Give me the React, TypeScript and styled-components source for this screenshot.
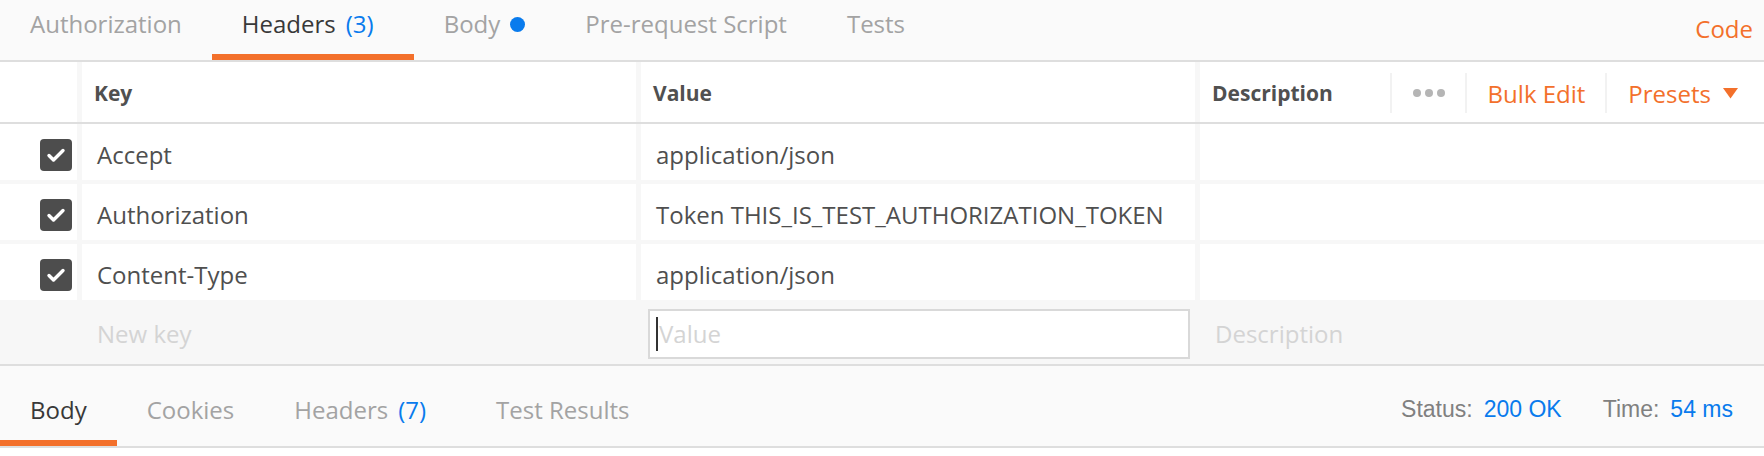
import React from "react";
import styled, { createGlobalStyle } from "styled-components";

const ORANGE = "#f3702b";
const BLUE = "#097bed";
const LINE = "#dedede";

const GlobalStyle = createGlobalStyle`
  html, body { margin: 0; padding: 0; background: #ffffff; }
  body { font-family: "Open Sans", "Liberation Sans", sans-serif; -webkit-font-smoothing: antialiased; }
  * { box-sizing: border-box; }
`;

const Page = styled.div`
  width: 1764px;
  display: flex;
  flex-direction: column;
`;

const TabBar = styled.div`
  height: 62px;
  display: flex;
  justify-content: space-between;
  align-items: stretch;
  background: #fafafa;
  border-bottom: 2px solid ${LINE};
`;

const TabList = styled.div`
  display: flex;
  align-items: stretch;
`;

const Tab = styled.div<{ $active?: boolean }>`
  display: flex;
  align-items: flex-start;
  padding: 7px 30px 0;
  font-size: 24px;
  line-height: 33px;
  white-space: nowrap;
  color: ${(p) => (p.$active ? "#383838" : "#a3a3a3")};
  box-shadow: ${(p) => (p.$active ? `inset 0 -6px 0 ${ORANGE}` : "none")};
`;

const Count = styled.span`
  color: ${BLUE};
  margin-left: 10px;
  margin-right: 10px;
`;

const Dot = styled.span`
  width: 15px;
  height: 15px;
  border-radius: 50%;
  background: ${BLUE};
  margin: 10px 0 0 10px;
`;

const CodeLink = styled.div`
  padding: 12px 11px 0 0;
  font-size: 24px;
  line-height: 33px;
  color: ${ORANGE};
`;

const Columns = styled.div`
  display: grid;
  grid-template-columns: 77px 554px 554px 1fr;
  column-gap: 5px;
`;

const HeaderRow = styled(Columns)`
  height: 62px;
  background: #f7f7f7;
  border-bottom: 2px solid ${LINE};
`;

const HeaderCell = styled.div`
  display: flex;
  align-items: center;
  background: #ffffff;
  padding: 2px 0 0 12px;
  font-size: 21px;
  font-weight: 700;
  color: #505050;
`;

const HeaderLabel = styled.span`
  flex: 1;
`;

const Action = styled.div<{ $last?: boolean }>`
  display: flex;
  align-items: center;
  height: 40px;
  padding: 0 ${(p) => (p.$last ? "26px" : "20px")} 0 21px;
  border-left: 2px solid #f2f2f2;
  font-size: 24px;
  font-weight: 400;
  color: ${ORANGE};
`;

const Dots = styled.div`
  display: flex;
  gap: 4px;
`;

const DotSmall = styled.span`
  width: 8px;
  height: 8px;
  border-radius: 50%;
  background: #b5b5b5;
`;

const Caret = styled.svg`
  margin-left: 12px;
`;

const Rows = styled.div`
  display: flex;
  flex-direction: column;
  gap: 4px;
  background: #f7f7f7;
`;

const DataRow = styled(Columns)`
  height: 56px;
`;

const CheckCell = styled.div`
  display: flex;
  align-items: center;
  justify-content: flex-end;
  padding: 6px 5px 0 0;
  background: #ffffff;
`;

const CheckBox = styled.span`
  width: 32px;
  height: 32px;
  border-radius: 4px;
  background: #4d4d4d;
  display: flex;
  align-items: center;
  justify-content: center;
`;

const Cell = styled.div`
  display: flex;
  align-items: center;
  padding: 5px 15px 0;
  background: #ffffff;
  font-size: 24px;
  color: #4f4f4f;
  white-space: nowrap;
`;

const NewRow = styled(Columns)`
  height: 62px;
  background: #f7f7f7;
  border-bottom: 2px solid ${LINE};
`;

const Placeholder = styled.div`
  display: flex;
  align-items: center;
  padding: 0 15px 2px;
  font-size: 24px;
  color: #d4d4d4;
`;

const InputCell = styled.div`
  display: flex;
  align-items: center;
  padding: 0 5px 0 7px;
`;

const ValueInput = styled.div`
  flex: 1;
  height: 50px;
  display: flex;
  align-items: center;
  padding: 0 0 2px 6px;
  background: #ffffff;
  border: 2px solid #d9d9d9;
  font-size: 24px;
  color: #d4d4d4;
`;

const TextCaret = styled.span`
  width: 2px;
  height: 34px;
  background: #333333;
  margin: 2px 1px 0 0;
`;

const ResponseBar = styled.div`
  height: 82px;
  display: flex;
  justify-content: space-between;
  background: #fafafa;
  border-bottom: 2px solid ${LINE};
`;

const ResponseTab = styled(Tab)`
  padding: 27px 30px 0;
`;

const StatusArea = styled.div`
  display: flex;
  align-items: flex-start;
  padding: 30px 31px 0 0;
  font-family: "Liberation Sans", Arial, sans-serif;
  font-size: 23px;
  line-height: 26px;
`;

const StatusGroup = styled.div<{ $gap?: number }>`
  display: flex;
  margin-left: ${(p) => p.$gap ?? 0}px;
`;

const StatusLabel = styled.span`
  color: #808080;
`;

const StatusValue = styled.span`
  color: ${BLUE};
  margin-left: 11px;
`;

const Check = () => (
  <svg width="32" height="32" viewBox="0 0 32 32">
    <path
      d="M9 16.5 L13.5 21 L23 11.5"
      fill="none"
      stroke="#ffffff"
      strokeWidth="3.4"
      strokeLinecap="round"
      strokeLinejoin="round"
    />
  </svg>
);

const rows = [
  { key: "Accept", value: "application/json" },
  { key: "Authorization", value: "Token THIS_IS_TEST_AUTHORIZATION_TOKEN" },
  { key: "Content-Type", value: "application/json" },
];

export default function App() {
  return (
    <Page>
      <GlobalStyle />
      <TabBar>
        <TabList>
          <Tab>Authorization</Tab>
          <Tab $active>
            Headers<Count>(3)</Count>
          </Tab>
          <Tab>
            Body<Dot />
          </Tab>
          <Tab>Pre-request Script</Tab>
          <Tab>Tests</Tab>
        </TabList>
        <CodeLink>Code</CodeLink>
      </TabBar>

      <HeaderRow>
        <HeaderCell />
        <HeaderCell>Key</HeaderCell>
        <HeaderCell>Value</HeaderCell>
        <HeaderCell>
          <HeaderLabel>Description</HeaderLabel>
          <Action>
            <Dots>
              <DotSmall />
              <DotSmall />
              <DotSmall />
            </Dots>
          </Action>
          <Action>Bulk Edit</Action>
          <Action $last>
            Presets
            <Caret width="15" height="11" viewBox="0 0 15 11">
              <path d="M0 0 H15 L7.5 10.5 Z" fill={ORANGE} />
            </Caret>
          </Action>
        </HeaderCell>
      </HeaderRow>

      <Rows>
        {rows.map((r) => (
          <DataRow key={r.key}>
            <CheckCell>
              <CheckBox>
                <Check />
              </CheckBox>
            </CheckCell>
            <Cell>{r.key}</Cell>
            <Cell>{r.value}</Cell>
            <Cell />
          </DataRow>
        ))}

        <NewRow>
          <div />
          <Placeholder>New key</Placeholder>
          <InputCell>
            <ValueInput>
              <TextCaret />
              Value
            </ValueInput>
          </InputCell>
          <Placeholder>Description</Placeholder>
        </NewRow>
      </Rows>

      <ResponseBar>
        <TabList>
          <ResponseTab $active>Body</ResponseTab>
          <ResponseTab>Cookies</ResponseTab>
          <ResponseTab>
            Headers<Count>(7)</Count>
          </ResponseTab>
          <ResponseTab>Test Results</ResponseTab>
        </TabList>
        <StatusArea>
          <StatusGroup>
            <StatusLabel>Status:</StatusLabel>
            <StatusValue>200 OK</StatusValue>
          </StatusGroup>
          <StatusGroup $gap={41}>
            <StatusLabel>Time:</StatusLabel>
            <StatusValue>54 ms</StatusValue>
          </StatusGroup>
        </StatusArea>
      </ResponseBar>
    </Page>
  );
}
